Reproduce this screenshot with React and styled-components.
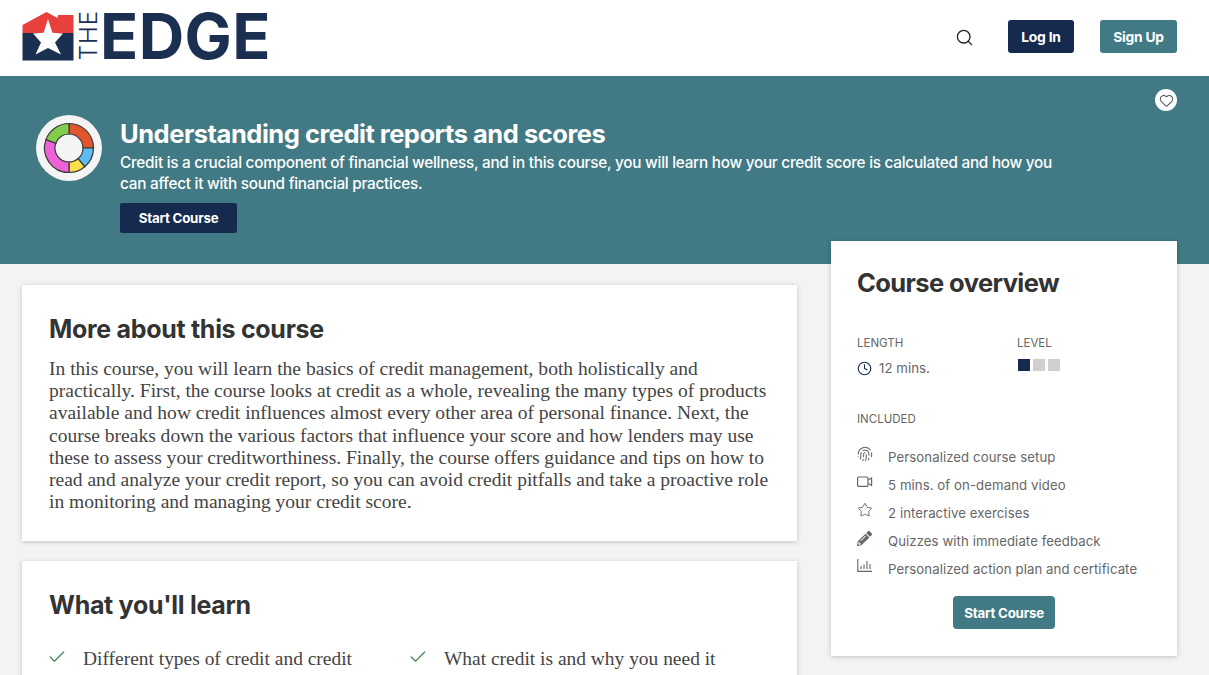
import styled, { createGlobalStyle } from 'styled-components';
import { Search, Clock, Star, Fingerprint, Check, Heart } from 'lucide-react';
import { FaPencilAlt } from 'react-icons/fa';

const sans = `Inter, 'Liberation Sans', sans-serif`;
const serif = `'Liberation Serif', serif`;

const GlobalStyle = createGlobalStyle`
	html, body {
		margin: 0;
		height: 675px;
		overflow: hidden;
		background: #f1f3f5;
	}
	* { box-sizing: border-box; }
`;

const includedItems = [
	['print', 'Personalized course setup'],
	['video', '5 mins. of on-demand video'],
	['star', '2 interactive exercises'],
	['pencil', 'Quizzes with immediate feedback'],
	['chart', 'Personalized action plan and certificate'],
];

const donutParts = [
	[0, 90, '#e2552f'],
	[90, 140, '#5cbcf0'],
	[140, 180, '#fbe04a'],
	[180, 290, '#ee62d8'],
	[290, 360, '#84cc4c'],
];

const arcPath = (from, to, r1, r2) => {
	const pt = (a, r) => {
		const rad = ((a - 90) * Math.PI) / 180;
		return `${(33 + r * Math.cos(rad)).toFixed(2)} ${(33 + r * Math.sin(rad)).toFixed(2)}`;
	};
	const large = to - from > 180 ? 1 : 0;
	return `M${pt(from, r2)} A${r2} ${r2} 0 ${large} 1 ${pt(to, r2)} L${pt(to, r1)} A${r1} ${r1} 0 ${large} 0 ${pt(from, r1)} Z`;
};

const CourseIcon = () => (
	<IconDisc>
		<svg width='66' height='66' viewBox='0 0 66 66'>
			{donutParts.map(([from, to, color]) => (
				<path key={from} d={arcPath(from, to, 14, 24.5)} fill={color} stroke='#3a3a3a' strokeWidth='1.2' />
			))}
		</svg>
	</IconDisc>
);

const ItemIcon = ({ kind }) => {
	if (kind === 'print') return <Fingerprint size={16} strokeWidth={1.6} />;
	if (kind === 'star') return <Star size={16} strokeWidth={1.4} />;
	if (kind === 'pencil') return <FaPencilAlt size={15} />;
	if (kind === 'video')
		return (
			<svg width='16' height='16' viewBox='0 0 16 16' fill='none' stroke='currentColor' strokeWidth='1.2'>
				<rect x='0.6' y='3' width='10.4' height='9.4' rx='1' />
				<path d='M11.6 5.8 L14.6 4 V11.4 L11.6 9.6' />
			</svg>
		);
	return (
		<svg width='16' height='16' viewBox='0 0 16 16' fill='none' stroke='currentColor' strokeWidth='1.1'>
			<path d='M0.8 1 V13.4 H15' />
			<path d='M4 11 V8 M7 11 V6.5 M10 11 V3 M13 11 V6' />
		</svg>
	);
};

export default function App() {
	return (
		<>
			<GlobalStyle />
			<Header>
				<Logo>
					<svg width='52' height='50' viewBox='0 0 52 50'>
						<path d='M0.5 14 L24.5 1 L35.5 7 L36 4 H51.5 V22 H0.5 Z' fill='#e8403c' />
						<path d='M0.5 22 H51.5 V49.5 H0.5 Z' fill='#1b3050' />
						<path d='M26 8 L30.4 21.8 L41 22.6 L33 31.5 L39 43.5 L26 37 L13.5 43.5 L19 31.5 L11 22.6 L21.6 21.8 Z' fill='#fff' />
					</svg>
					<LogoThe>THE</LogoThe>
					<LogoEdge>EDGE</LogoEdge>
				</Logo>
				<Actions>
					<SearchButton>
						<Search size={19} strokeWidth={1.7} />
					</SearchButton>
					<NavButton $bg='#152a4e'>Log In</NavButton>
					<NavButton $bg='#417a84' $wide>Sign Up</NavButton>
				</Actions>
			</Header>

			<Hero>
				<CourseIcon />
				<HeroText>
					<HeroTitle>Understanding credit reports and scores</HeroTitle>
					<HeroCopy>
						Credit is a crucial component of financial wellness, and in this course, you will learn how your credit score is calculated and how you can affect it with sound financial practices.
					</HeroCopy>
					<HeroButton>Start Course</HeroButton>
				</HeroText>
				<HeartBadge>
					<Heart size={15} strokeWidth={1.7} />
				</HeartBadge>
			</Hero>

			<Body>
				<MainColumn>
					<Card>
						<CardTitle>More about this course</CardTitle>
						<Paragraph>
							In this course, you will learn the basics of credit management, both holistically and
							practically. First, the course looks at credit as a whole, revealing the many types of products
							available and how credit influences almost every other area of personal finance. Next, the
							course breaks down the various factors that influence your score and how lenders may use
							these to assess your creditworthiness. Finally, the course offers guidance and tips on how to
							read and analyze your credit report, so you can avoid credit pitfalls and take a proactive role
							in monitoring and managing your credit score.
						</Paragraph>
					</Card>
					<Card>
						<CardTitle>What you'll learn</CardTitle>
						<LearnGrid>
							<LearnItem>
								<Check size={20} strokeWidth={1.6} />
								<span>Different types of credit and credit products</span>
							</LearnItem>
							<LearnItem>
								<Check size={20} strokeWidth={1.6} />
								<span>What credit is and why you need it</span>
							</LearnItem>
						</LearnGrid>
					</Card>
				</MainColumn>

				<Overview>
					<OverviewTitle>Course overview</OverviewTitle>
					<Facts>
						<div>
							<Label>LENGTH</Label>
							<Length>
								<Clock size={15} strokeWidth={1.8} />
								12 mins.
							</Length>
						</div>
						<div>
							<Label>LEVEL</Label>
							<LevelBar>
								<LevelDot $on />
								<LevelDot />
								<LevelDot />
							</LevelBar>
						</div>
					</Facts>
					<Label>INCLUDED</Label>
					<IncludedList>
						{includedItems.map(([kind, text]) => (
							<IncludedRow key={kind}>
								<IconCell>
									<ItemIcon kind={kind} />
								</IconCell>
								{text}
							</IncludedRow>
						))}
					</IncludedList>
					<OverviewButton>Start Course</OverviewButton>
				</Overview>
			</Body>
		</>
	);
}

const Header = styled.header`
	height: 76px;
	background: #fff;
	display: flex;
	align-items: center;
	justify-content: space-between;
	padding: 0 32px 0 22px;
`;

const Logo = styled.div`
	display: flex;
	align-items: center;
	height: 50px;
	margin-top: -5px;
`;

const LogoThe = styled.span`
	writing-mode: vertical-rl;
	transform: rotate(180deg);
	font: 300 24px/18px ${sans};
	letter-spacing: 1px;
	color: #1b3050;
	width: 18px;
	margin-left: 6px;
	text-align: center;
`;

const LogoEdge = styled.span`
	font: 700 63px/64px ${sans};
	color: #1b3050;
	margin-left: 2px;
	letter-spacing: 0.4px;
`;

const Actions = styled.div`
	display: flex;
	align-items: center;
`;

const SearchButton = styled.div`
	display: flex;
	color: #222;
	margin-right: 34px;
	margin-top: -2px;
`;

const NavButton = styled.button`
	height: 33px;
	width: ${(p) => (p.$wide ? '77px' : '66px')};
	margin-left: ${(p) => (p.$wide ? '26px' : '0')};
	margin-top: -3px;
	padding: 0;
	border: 0;
	border-radius: 3px;
	background: ${(p) => p.$bg};
	color: #fff;
	font: 700 13.8px ${sans};
	letter-spacing: -0.2px;
`;

const Hero = styled.section`
	position: relative;
	height: 188px;
	background: #417a84;
	display: flex;
	align-items: flex-start;
	padding: 39px 0 0 36px;
`;

const IconDisc = styled.div`
	width: 66px;
	height: 66px;
	border-radius: 50%;
	background: #f4f4f4;
	flex: none;
	display: flex;
`;

const HeroText = styled.div`
	margin-left: 18px;
	width: 950px;
	color: #fff;
`;

const HeroTitle = styled.h1`
	margin: 2px 0 0;
	font: 700 25.5px/34px ${sans};
	letter-spacing: -0.48px;
`;

const HeroCopy = styled.p`
	margin: 1px 0 0;
	font: 500 15.3px/21px ${sans};
	letter-spacing: -0.25px;
`;

const HeroButton = styled.button`
	display: block;
	margin-top: 9px;
	width: 117px;
	height: 30px;
	padding: 0;
	border: 0;
	border-radius: 2px;
	background: #152a4e;
	color: #fff;
	font: 700 13.3px ${sans};
	letter-spacing: -0.2px;
`;

const HeartBadge = styled.div`
	position: absolute;
	top: 13px;
	right: 32px;
	width: 22px;
	height: 22px;
	border-radius: 50%;
	background: #fff;
	color: #555;
	display: flex;
	align-items: center;
	justify-content: center;
`;

const Body = styled.main`
	display: grid;
	grid-template-columns: 775px 346px;
	column-gap: 34px;
	padding-left: 22px;
	align-items: start;
`;

const MainColumn = styled.div`
	display: grid;
	grid-template-columns: 775px;
	gap: 20px;
	padding-top: 21px;
`;

const Card = styled.section`
	background: #fff;
	padding: 27px 27px 27.6px;
	box-shadow: 0 1px 5px rgba(0, 0, 0, 0.2);
`;

const CardTitle = styled.h2`
	margin: 0;
	font: 700 25px/34px ${sans};
	letter-spacing: -0.3px;
	color: #333;
`;

const Paragraph = styled.p`
	margin: 12px 0 0;
	font: 400 19.52px/22.2px ${serif};
	color: #444;
`;

const LearnGrid = styled.div`
	display: grid;
	grid-template-columns: 361px 1fr;
	margin-top: 25px;
`;

const LearnItem = styled.div`
	display: flex;
	gap: 16px;
	margin-left: -2px;
	font: 400 19.45px/24px ${serif};
	color: #444;
	width: 320px;
	svg {
		color: #4a8a5c;
		flex: none;
		margin-top: 0;
	}
`;

const Overview = styled.aside`
	position: relative;
	margin-top: -23px;
	height: 415px;
	background: #fff;
	padding: 24px 26px 0;
	box-shadow: 0 1px 5px rgba(0, 0, 0, 0.2);
	display: flex;
	flex-direction: column;
`;

const OverviewTitle = styled.h2`
	margin: 0;
	font: 700 25.5px/36px ${sans};
	letter-spacing: -0.6px;
	color: #333;
`;

const Facts = styled.div`
	display: grid;
	grid-template-columns: 160px 1fr;
	margin-top: 34px;
	margin-bottom: 34px;
`;

const Label = styled.div`
	font: 400 11.5px/16px ${sans};
	color: #666;
`;

const Length = styled.div`
	display: flex;
	align-items: center;
	gap: 7px;
	margin-top: 8px;
	font: 400 13.3px/18px ${sans};
	color: #666;
	svg {
		color: #152a4e;
	}
`;

const LevelBar = styled.div`
	display: flex;
	gap: 3px;
	margin-top: 8px;
	margin-left: 1px;
`;

const LevelDot = styled.span`
	width: 12px;
	height: 12px;
	background: ${(p) => (p.$on ? '#152a4e' : '#cfcfcf')};
`;

const IncludedList = styled.ul`
	list-style: none;
	margin: 16px 0 0;
	padding: 0;
`;

const IncludedRow = styled.li`
	display: flex;
	align-items: center;
	height: 28px;
	font: 400 13.2px/28px ${sans};
	letter-spacing: 0.08px;
	color: #666;
`;

const IconCell = styled.span`
	width: 31px;
	display: flex;
	margin-top: -6px;
	color: #666;
`;

const OverviewButton = styled.button`
	align-self: center;
	margin-top: 13px;
	width: 102px;
	height: 33px;
	padding: 0;
	border: 0;
	border-radius: 4px;
	background: #417a84;
	color: #fff;
	font: 700 13.3px ${sans};
	letter-spacing: -0.2px;
`;
